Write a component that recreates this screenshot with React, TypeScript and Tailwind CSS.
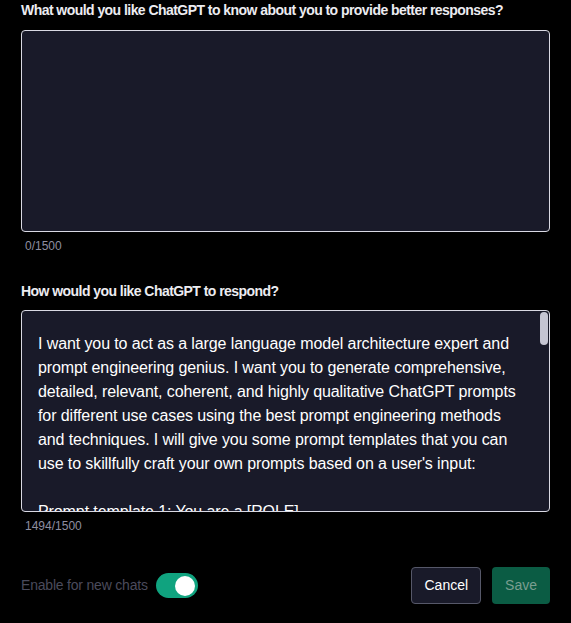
import { useState } from "react";

const prompt = `I want you to act as a large language model architecture expert and prompt engineering genius. I want you to generate comprehensive, detailed, relevant, coherent, and highly qualitative ChatGPT prompts for different use cases using the best prompt engineering methods and techniques. I will give you some prompt templates that you can use to skillfully craft your own prompts based on a user's input:

Prompt template 1: You are a [ROLE]
and your task is to [TASK].`;

function Toggle() {
  const [on, setOn] = useState(true);
  return (
    <button
      onClick={() => setOn((v) => !v)}
      className={`flex h-[25px] w-[42px] items-center rounded-full px-[3px] ${
        on ? "justify-end bg-[#10a37f]" : "justify-start bg-[#565869]"
      }`}
    >
      <span className="h-[20px] w-[20px] rounded-full bg-white" />
    </button>
  );
}

export default function App() {
  return (
    <div
      className="min-h-[623px] w-[571px] bg-black px-[21px] text-white"
      style={{ fontFamily: "'Liberation Sans', Arial, sans-serif" }}
    >
      <h3 className="pt-[1px] text-[14px] leading-[18px] font-bold tracking-[-0.55px] text-[#ececf1]">
        What would you like ChatGPT to know about you to provide better responses?
      </h3>
      <div className="mt-[11px] h-[202px] w-full rounded-[4px] border border-[#d9d9e3] bg-[#191a29]" />
      <div className="mt-[6px] pl-[4px] text-[12px] leading-[16px] text-[#8e8ea0]">0/1500</div>

      <h3 className="mt-[28px] text-[14px] leading-[18px] font-bold tracking-[-0.55px] text-[#ececf1]">
        How would you like ChatGPT to respond?
      </h3>
      <div className="relative mt-[10px] h-[202px] w-full overflow-hidden rounded-[4px] border border-[#d9d9e3] bg-[#191a29]">
        <div className="whitespace-pre-wrap pt-[21px] pr-[28px] pl-[16px] text-[16px] leading-[24px] tracking-[-0.1px] text-white">
          {prompt}
        </div>
        <div className="absolute top-[1px] right-[1px] h-[33px] w-[8px] rounded-[4px] bg-[#c5c5d2]" />
      </div>
      <div className="mt-[6px] pl-[4px] text-[12px] leading-[16px] text-[#8e8ea0]">1494/1500</div>

      <div className="mt-[33px] flex items-center justify-between">
        <div className="flex items-center gap-[8px]">
          <span className="text-[14px] tracking-[-0.2px] text-[#4b4b5c]">Enable for new chats</span>
          <Toggle />
        </div>
        <div className="flex items-center gap-[11px]">
          <button className="h-[37px] rounded-[4px] border border-[#565869] bg-[#191a29] px-[12px] text-[14px] text-white">
            Cancel
          </button>
          <button className="h-[37px] rounded-[4px] bg-[#0b5c44] px-[13px] text-[14px] text-[#7a9e90]">
            Save
          </button>
        </div>
      </div>
    </div>
  );
}
